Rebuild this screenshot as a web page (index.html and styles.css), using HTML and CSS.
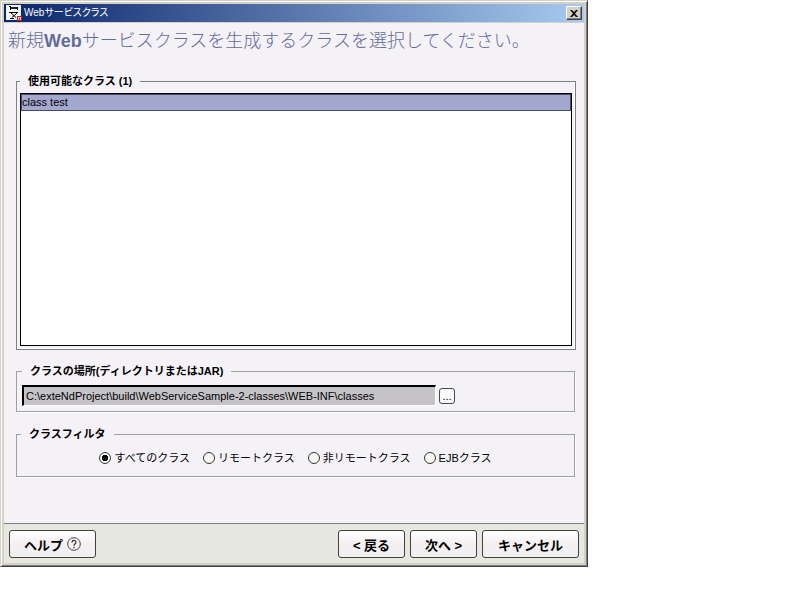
FILE: index.html
```html
<!DOCTYPE html>
<html lang="ja">
<head>
    <meta charset="UTF-8">
    <meta name="viewport" content="width=device-width, initial-scale=1.0">
    <title>Webサービスクラス</title>
    <link rel="stylesheet" href="styles.css">
</head>
<body>
<form class="dialog">
    <div class="titlebar">
        <svg class="app-icon" viewBox="0 0 16 16" width="16" height="16" aria-hidden="true">
            <rect width="15" height="15" fill="#f4f4f4"/>
            <path d="M3 1.500h2M4.500 2v3M11.500 2v3" fill="none" stroke="#000"/>
            <path d="M5 2h6v2H5z" fill="#222"/>
            <path d="M3 7.500h9" fill="none" stroke="#000"/>
            <path d="M5 8l5 4.500M11 8l-5 4.500M4 13.500h4" fill="none" stroke="#000"/>
            <rect x="11" y="11" width="5" height="5" fill="#d01818"/>
            <path d="M12.500 15v-3l1 1 1-1v3" fill="none" stroke="#fff" stroke-width=".8"/>
        </svg>
        <span class="title">Webサービスクラス</span>
        <button type="button" class="close" aria-label="閉じる">
            <svg viewBox="0 0 8 7" width="8" height="7" aria-hidden="true">
                <path d="M0 0h2l2 2 2-2h2L5 3.500 8 7H6L4 5 2 7H0l3-3.500z" fill="#000"/>
            </svg>
        </button>
    </div>

    <div class="content">
        <h1>新規<b>Web</b>サービスクラスを生成するクラスを選択してください。</h1>

        <fieldset class="group available">
            <legend>使用可能なクラス (1)</legend>
            <ul class="class-list">
                <li class="selected">class test</li>
            </ul>
        </fieldset>

        <fieldset class="group location">
            <legend>クラスの場所(ディレクトリまたはJAR)</legend>
            <div class="path-row">
                <input type="text" class="path" aria-label="クラスの場所" value="C:\exteNdProject\build\WebServiceSample-2-classes\WEB-INF\classes" readonly>
                <button type="button" class="browse">...</button>
            </div>
        </fieldset>

        <fieldset class="group filter">
            <legend>クラスフィルタ</legend>
            <div class="radios">
                <label><input type="radio" name="filter" checked>すべてのクラス</label>
                <label><input type="radio" name="filter">リモートクラス</label>
                <label><input type="radio" name="filter">非リモートクラス</label>
                <label><input type="radio" name="filter">EJBクラス</label>
            </div>
        </fieldset>
    </div>

    <div class="footer">
        <button type="button" class="btn help">ヘルプ
            <svg viewBox="0 0 14 14" width="14" height="14" aria-hidden="true">
                <circle cx="7" cy="7" r="6.300" fill="none" stroke="#444" stroke-width="1"/>
                <path d="M5 5.500C5 2.800 9 2.800 9 5.300 9 6.800 7 6.800 7 8.800M7 9.800v1.400" fill="none" stroke="#333" stroke-width="1.200"/>
            </svg>
        </button>
        <button type="button" class="btn">&lt; 戻る</button>
        <button type="button" class="btn">次へ &gt;</button>
        <button type="button" class="btn cancel">キャンセル</button>
    </div>
</form>
</body>
</html>
```

FILE: styles.css
```css
* {
    box-sizing: border-box;
}
body {
    margin: 0;
    background-color: #fff;
    font-family: "Liberation Sans", "Noto Sans CJK JP", sans-serif;
    font-size: 11px;
    color: #000;
}
button, input {
    font: inherit;
    color: inherit;
}
.dialog {
    max-width: 588px;
    padding: 3px;
    background-color: #d4d0c8;
    border: 1px solid;
    border-color: #d4d0c8 #404040 #404040 #d4d0c8;
    box-shadow: inset 1px 1px #fff, inset -1px -1px #808080;
}
.titlebar {
    display: flex;
    align-items: center;
    gap: 2px;
    height: 18px;
    margin-bottom: 1px;
    padding: 0 2px;
    background: linear-gradient(to right, #0a246a, #a6caf0);
}
.title {
    flex: 1;
    color: #fff;
    font-size: 10px;
    line-height: 18px;
    font-feature-settings: "palt";
}
.close {
    display: flex;
    align-items: center;
    justify-content: center;
    width: 16px;
    height: 14px;
    padding: 0;
    background-color: #d4d0c8;
    border: 1px solid;
    border-color: #fff #404040 #404040 #fff;
    box-shadow: inset -1px -1px #808080;
}
.content {
    padding: 4px 9px 46px 12px;
    background-color: #f5f2f7;
}
h1 {
    margin: 0 -4px 19px -8px;
    font-size: 18px;
    line-height: 28px;
    font-weight: 300;
    color: #646c98;
}
h1 b {
    font-weight: bold;
}
.group {
    min-width: 0;
    margin: 0;
    border: 1px solid #a0a0a0;
    box-shadow: 1px 1px #fff;
}
.group legend {
    padding: 0 8px;
    font-weight: bold;
    line-height: 14px;
}
.available {
    margin-right: -1px;
    padding: 5px 3px 3px;
    border-color: #808080;
    box-shadow: inset -1px -1px #fff;
}
.class-list {
    height: 253px;
    margin: 0;
    padding: 0;
    list-style: none;
    background-color: #fff;
    border: 1px solid #000;
}
.class-list li {
    padding: 0 1px;
    line-height: 15px;
}
.class-list .selected {
    background-color: #a4a8ce;
    border: 1px solid #484c6c;
    padding: 0;
}
.location {
    margin-top: 14px;
    padding: 7px 5px 5px;
}
.path-row {
    display: flex;
    align-items: center;
    gap: 3px;
}
.path {
    flex: 0 1 414px;
    min-width: 0;
    height: 21px;
    padding: 0 2px;
    background-color: #c5c3c7;
    border: solid;
    border-width: 2px 1px 1px 2px;
    border-color: #000 #fff #fff #000;
    outline: none;
}
.browse {
    width: 16px;
    height: 16px;
    padding: 0;
    line-height: 12px;
    background-color: #fafafa;
    border: 1px solid #484848;
    border-radius: 3px;
}
.filter {
    margin-top: 15px;
    padding: 8px 4px 9px;
}
.radios {
    display: flex;
    flex-wrap: wrap;
    justify-content: center;
    gap: 13px;
}
.radios label {
    display: flex;
    align-items: center;
    gap: 3px;
    line-height: 18px;
}
.radios input {
    appearance: none;
    width: 12px;
    height: 12px;
    margin: 0;
    background-color: #fafaf4;
    border: 1px solid #333;
    border-radius: 50%;
}
.radios input:checked {
    background-image: radial-gradient(circle, #000 3px, transparent 3px);
}
.footer {
    display: flex;
    gap: 5px;
    padding: 6px 5px 5px;
    background-color: #e6e7de;
    border-top: 1px solid #808088;
}
.btn {
    display: flex;
    align-items: center;
    justify-content: center;
    gap: 4px;
    min-width: 67px;
    height: 28px;
    padding: 0 8px;
    font-size: 13px;
    font-weight: bold;
    background: linear-gradient(#fff, #f4eff2 50%, #f0f0ee);
    border: 1px solid #404040;
    border-radius: 3px;
}
.help {
    margin-right: auto;
    padding: 0 14px;
}
.cancel {
    min-width: 97px;
}
```
